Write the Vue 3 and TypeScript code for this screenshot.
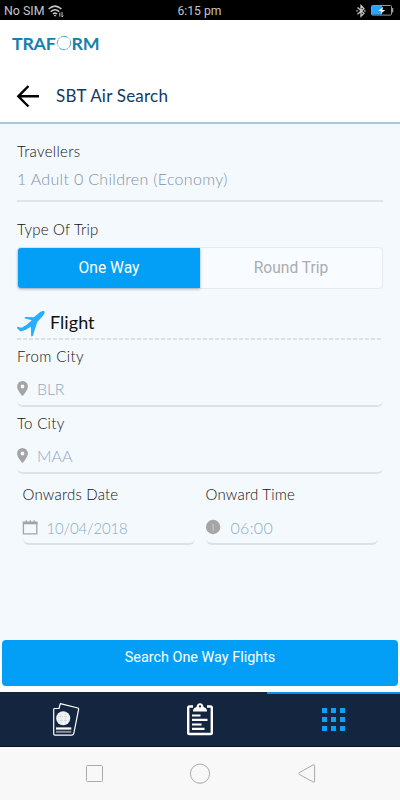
<script setup lang="ts">
interface Place { label: string; code: string; key: string }
const places: Place[] = [
  { label: 'From City', code: 'BLR', key: 'from' },
  { label: 'To City', code: 'MAA', key: 'to' },
]
const cells: number[] = [0, 1, 2, 3, 4, 5, 6, 7, 8]
</script>

<template>
  <div class="screen">
    <div class="status">
      <div class="side">
        <span class="sim">No SIM</span>
        <svg width="17" height="14" viewBox="0 0 17 14" fill="none" stroke="#c4c4c4" stroke-width="1.5">
          <path d="M.6 5Q7 -.8 13.4 5M2.8 7.6Q7 4 11.2 7.6M5 10Q7 8.2 9 10" />
          <path d="M5.7 11h2.6L7 12.8z" fill="#c4c4c4" stroke="none" />
          <path d="M11.8 8.6v4M14 8v5l1.2-1.4" stroke-width="1" />
        </svg>
      </div>
      <span class="clock">6:15 pm</span>
      <div class="side right">
        <svg width="10" height="12" viewBox="0 0 10 12" fill="none" stroke="#c9c9c9" stroke-width="1.3">
          <path d="M1.5 2.6L8 8.2 5 11.2V.6L8 3.6 1.5 9.2M.2 5.9h1.6M8 5.9h1.6" />
        </svg>
        <svg width="24" height="12" viewBox="0 0 24 12">
          <rect x=".5" y=".5" width="20" height="9.6" rx="1" fill="#000" stroke="#999" />
          <rect x="1" y="1" width="10" height="8.6" fill="#2ba3fa" />
          <rect x="21" y="3" width="1.3" height="4.5" fill="#999" />
          <path d="M12.3 1.7L7.3 6h3.3L9.4 9.1 14.3 5.1h-3z" fill="#fff" />
        </svg>
      </div>
    </div>

    <header class="header">
      <div class="logo">
        <span class="logo-a">TRAF</span>
        <svg class="ring" width="16" height="16" viewBox="0 0 16 16" fill="none" stroke="#1d86ae">
          <circle cx="8" cy="8" r="6.7" stroke-width="1" stroke-dasharray="5 1 2 .8 7 1.6 1 1.2" opacity=".75" />
        </svg>
        <span class="logo-b">RM</span>
      </div>
      <div class="title-row">
        <svg width="24" height="24" viewBox="0 0 24 24" fill="none" stroke="#000" stroke-width="2.4">
          <path d="M12.5 2L2.3 12.3 12.5 22.5M2.3 12.3H23" />
        </svg>
        <h1 class="title">SBT Air Search</h1>
      </div>
    </header>

    <main class="form">
      <section class="travellers">
        <div class="label l-trav">Travellers</div>
        <div class="people">1 Adult 0 Children (Economy)</div>
      </section>

      <div class="label l-type">Type Of Trip</div>
      <div class="toggle">
        <div class="option active">One Way</div>
        <div class="option">Round Trip</div>
      </div>

      <div class="flight">
        <svg width="28" height="26" viewBox="0 0 28 26" fill="#2aaefa">
          <path d="M27.4.5C28 1.4 27.3 3.2 25.9 4.8L20.2 11.2 15.8 25 14.2 25.5 13.8 15.7 9 18.8 3.6 20.4.1 17.2.3 15.8 4.6 16.8 9.3 14 14.8 9.3 7.3 7.2 8.3 6 16.8 6.2 22.5 1.6C24.5.1 26.6-.3 27.4.5Z" />
        </svg>
        <h2 class="flight-title">Flight</h2>
      </div>

      <section v-for="p in places" :key="p.key" class="place">
        <div class="label" :class="'l-' + p.key">{{ p.label }}</div>
        <div class="input">
          <svg width="11" height="15" viewBox="0 0 11 15">
            <path d="M5.5 0A5.4 5.4 0 0 0 .1 5.4C.1 9.2 5.5 15 5.5 15S10.9 9.2 10.9 5.4A5.4 5.4 0 0 0 5.5 0ZM5.5 3.6A1.9 1.9 0 1 1 5.5 7.4 1.9 1.9 0 0 1 5.5 3.6Z" fill="#a4a4a4" />
          </svg>
          <span class="value" :class="'v-' + p.key">{{ p.code }}</span>
        </div>
      </section>

      <div class="when">
        <section class="half">
          <div class="label l-date">Onwards Date</div>
          <div class="input">
            <svg width="15" height="15" viewBox="0 0 15 15" fill="none" stroke="#a4a4a4">
              <path d="M.4 2.5h13.4v11.3H.4z" stroke-width="1.3" />
              <path d="M-.2 3h14.6" stroke-width="2.6" />
              <path d="M3.2 .3v2M7.2 .3v2M11.2 .3v2" stroke-width="1.4" />
            </svg>
            <span class="value v-date">10/04/2018</span>
          </div>
        </section>
        <section class="half">
          <div class="label l-time">Onward Time</div>
          <div class="input">
            <svg width="15" height="15" viewBox="0 0 15 15" fill="none">
              <circle cx="7.1" cy="7" r="7.2" fill="#a6a6a6" />
              <path d="M5.7 4l1.5.6v6.6" stroke="#c9cbcd" />
            </svg>
            <span class="value v-time">06:00</span>
          </div>
        </section>
      </div>
    </main>

    <div class="cta-bar"><button class="cta" type="button">Search One Way Flights</button></div>

    <nav class="tabs">
      <div class="tab passport">
        <svg width="28" height="36" viewBox="0 0 28 36" fill="none" stroke="#fff" stroke-width="1.2">
          <path d="M1.7 7.3Q1.7 6.5 2.5 6.5H7L8.3 1.7 26 6Q26.8 6.3 26.6 7.3L21.8 31.3Q21.4 33.1 19.5 33.1H3Q1.7 33.1 1.7 31.8Z" stroke-linejoin="round" />
          <circle cx="11.2" cy="16.3" r="7" fill="#f1f2f4" stroke="none" />
          <path d="M6 14.5h10.5M6 18.5h10.5M9 10.5v12M13.5 10.5v12" stroke="#b6bcc6" stroke-width=".6" stroke-dasharray="1 1" />
          <path d="M4 26.5h15.3" stroke-width="2.2" />
          <path d="M4 29.8h15.3" stroke="#8791a1" stroke-width="2" />
        </svg>
      </div>
      <div class="tab">
        <svg width="28" height="34" viewBox="0 0 28 34" fill="none" stroke="#fff">
          <path d="M7 3.5H3.5Q2.2 3.5 2.2 4.8V29.7Q2.2 31 3.5 31H24.5Q25.8 31 25.8 29.7V4.8Q25.8 3.5 24.5 3.5H21" stroke-width="2.4" />
          <path d="M7 8.5V7Q8 4.5 10.5 4 11 .3 14 .3T17.5 4Q20 4.5 21 7V8.5Z" fill="#fff" stroke="none" />
          <circle cx="14" cy="3.4" r="1.1" fill="#14263f" stroke="none" />
          <path d="M6 12.5h8.5M6 16.9h15.5M6 21.5h9.5M6 25.9h12.5" stroke-width="2.2" />
        </svg>
      </div>
      <div class="tab current">
        <div class="grid"><i v-for="c in cells" :key="c" class="cell"></i></div>
      </div>
    </nav>

    <div class="system">
      <svg width="18" height="18" viewBox="0 0 18 18" fill="none" stroke="#aaa"><rect x="1.5" y=".5" width="16" height="16" rx="1" /></svg>
      <svg width="20" height="20" viewBox="0 0 20 20" fill="none" stroke="#aaa"><circle cx="10" cy="9.7" r="9.6" /></svg>
      <svg width="18" height="20" viewBox="0 0 18 20" fill="none" stroke="#aaa"><path d="M16.4.8Q17.6.2 17.6 1.7V17.2Q17.6 18.8 16.4 18.1L2.3 10.4Q1.3 9.5 2.3 8.6Z" /></svg>
    </div>
  </div>
</template>

<style>
body { margin: 0; }
</style>

<style scoped>
* { box-sizing: border-box; }
.screen { width: 400px; height: 800px; display: flex; flex-direction: column; overflow: hidden; background: #f4f9fe; font-family: Lato, "Noto Sans", sans-serif; white-space: nowrap; }
svg { display: block; flex: none; overflow: visible; }
.status { height: 20px; flex: none; background: #000; color: #c4c4c4; display: flex; align-items: center; font: 12.5px/20px Roboto, sans-serif; padding: 1px 5px 0 4px; }
.side { flex: 1; display: flex; align-items: center; gap: 3px; }
.side.right { justify-content: flex-end; gap: 5px; }
.sim { font-size: 12.4px; }
.clock { font-size: 12.2px; }
.header { height: 104px; flex: none; background: #fff; border-bottom: 2px solid #a7c7dd; }
.logo { display: flex; align-items: center; height: 46px; padding-left: 12px; color: #1881aa; font: 700 17.8px/20px Lato, sans-serif; }
.logo-a { letter-spacing: -.25px; }
.logo-b { letter-spacing: -.2px; }
.title-row { display: flex; align-items: center; gap: 16px; height: 60px; padding: 0 0 0 16px; }
.title { margin: 0; font-size: 17px; font-weight: 400; line-height: 24px; color: #123a63; letter-spacing: .22px; }
.form { flex: 1; padding: 15px 17px 0; }
.label { font-size: 15px; line-height: 24px; color: #111; font-weight: 300; letter-spacing: .3px; }
.travellers { height: 63px; border-bottom: 2px solid #e0e4e8; }
.people { font-size: 16px; line-height: 31px; color: #8391a8; font-weight: 300; letter-spacing: .32px; }
.l-type { margin-top: 15px; letter-spacing: .2px; }
.l-from { letter-spacing: .4px; }
.l-date { letter-spacing: .2px; }
.l-time { letter-spacing: .2px; }
.toggle { display: grid; grid-template-columns: 1fr 1fr; height: 42px; margin-top: 6px; border: 1px solid #e6ebef; border-radius: 4px; background: #f8fbff; font: 15.6px/40px Roboto, sans-serif; text-align: center; color: #a9adb1; }
.active { background: #039ff7; color: #fff; border-radius: 3px 0 0 3px; box-shadow: 0 1px 3px #96a6b2; }
.flight { display: flex; align-items: center; gap: 5px; height: 51px; padding-top: 18px; background: repeating-linear-gradient(90deg, #dce1e5 0 4px, transparent 4px 6px) bottom / 100% 2px no-repeat; }
.flight-title { margin: -4px 0 0; font-size: 18px; font-weight: 400; line-height: 28px; letter-spacing: .05px; color: #111; }
.place { height: 67px; padding-top: 4px; }
.input { display: flex; align-items: center; height: 39px; border-bottom: 2px solid #dce1e5; border-radius: 0 0 6px 6px; gap: 9px; padding-top: 5px; }
.place .input { gap: 9px; padding-top: 3px; }
.value { font-size: 16px; line-height: 24px; font-weight: 300; color: #8eabc2; }
.place .value { padding-top: 1px; }
.v-from { letter-spacing: -.2px; }
.v-date { font-size: 15px; letter-spacing: -.15px; padding-top: 1px; }
.v-time { letter-spacing: .3px; padding: 1px 0 0 1px; }
.when { display: grid; grid-template-columns: 172px 172px; gap: 11px; padding: 8px 0 0 5.5px; }
.cta-bar { height: 52px; flex: none; padding: 0 2px; background: linear-gradient(#f4f9fe 40%, #fff 40%); }
.cta { display: block; width: 100%; height: 46px; border: 0; border-radius: 4px; background: #039ff7; color: #fff; padding: 0 0 10px; font: 14.4px/30px Roboto, sans-serif; }
.tabs { height: 55px; flex: none; background: #14263f; border-bottom: 1px solid #07102c; display: grid; grid-template-columns: 1fr 1fr 1fr; }
.tab { display: flex; align-items: center; justify-content: center; border-top: 2px solid #14263f; }
.passport { padding-right: 2px; }
.current { border-top-color: #0e8fe0; padding-bottom: 2px; }
.grid { display: grid; grid-template-columns: repeat(3, 5px); gap: 4px; }
.cell { width: 5px; height: 5px; background: #109ff5; }
.system { height: 53px; flex: none; background: #f8f8f8; display: flex; align-items: center; justify-content: center; gap: 87px; }
</style>
